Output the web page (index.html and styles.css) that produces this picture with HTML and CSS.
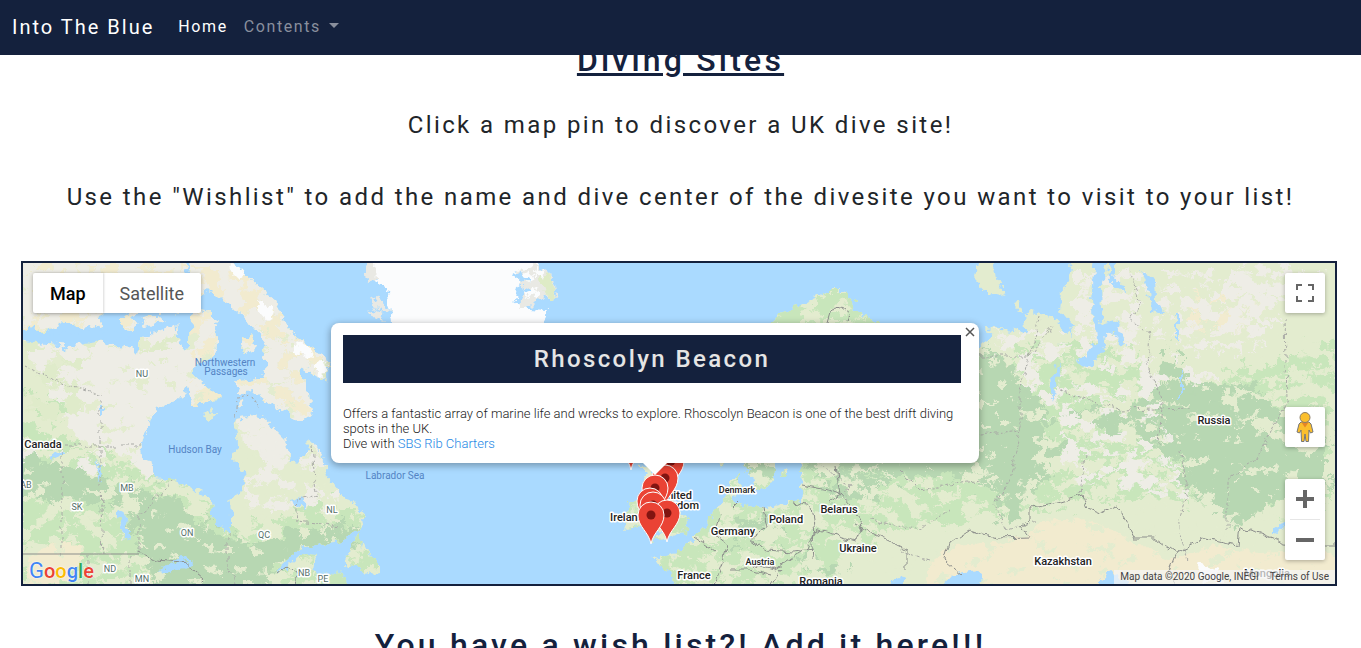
FILE: index.html
```html
<!DOCTYPE html>
<html lang="en">
<head>
<meta charset="utf-8">
<title>Into The Blue</title>
<link rel="stylesheet" href="styles.css">
</head>
<body>
<nav class="navbar">
  <a class="brand" href="#">Into The Blue</a>
  <a class="nav-link active" href="#">Home</a>
  <button class="nav-link dropdown" type="button">Contents<span class="caret"></span></button>
</nav>
<main class="page">
  <h2 class="title underlined">Diving Sites</h2>
  <p class="lead">Click a map pin to discover a UK dive site!</p>
  <p class="lead">Use the "Wishlist" to add the name and dive center of the divesite you want to visit to your list!</p>
  <section class="map" aria-label="Map of dive sites">
    <svg class="map-canvas" viewBox="23 263 1312 321" preserveAspectRatio="xMidYMid slice">
      <defs>
        <filter id="coast" x="0" y="0" width="1" height="1" color-interpolation-filters="sRGB">
          <feTurbulence type="fractalNoise" baseFrequency="0.13" numOctaves="3" seed="4" result="n"/>
          <feDisplacementMap in="SourceGraphic" in2="n" scale="12" xChannelSelector="R" yChannelSelector="G"/>
        </filter>
        <filter id="line" x="-0.1" y="-0.1" width="1.2" height="1.2" color-interpolation-filters="sRGB">
          <feTurbulence type="fractalNoise" baseFrequency="0.1" numOctaves="2" seed="9" result="n"/>
          <feDisplacementMap in="SourceGraphic" in2="n" scale="9" xChannelSelector="R" yChannelSelector="G"/>
        </filter>
        <filter id="patch" x="-0.1" y="-0.1" width="1.2" height="1.2" color-interpolation-filters="sRGB">
          <feTurbulence type="fractalNoise" baseFrequency="0.05 0.07" numOctaves="5" seed="7" result="n"/>
          <feColorMatrix in="n" values="0 0 0 0 0  0 0 0 0 0  0 0 0 0 0  24 0 0 0 -10.4" result="m"/>
          <feDisplacementMap in="SourceGraphic" in2="n" scale="46" xChannelSelector="G" yChannelSelector="B" result="d"/>
          <feComposite in="d" in2="m" operator="in"/>
        </filter>
        <filter id="sparse" x="-0.1" y="-0.1" width="1.2" height="1.2" color-interpolation-filters="sRGB">
          <feTurbulence type="fractalNoise" baseFrequency="0.05 0.07" numOctaves="4" seed="15" result="n"/>
          <feColorMatrix in="n" values="0 0 0 0 0  0 0 0 0 0  0 0 0 0 0  24 0 0 0 -12.6" result="m"/>
          <feComposite in="SourceGraphic" in2="m" operator="in"/>
        </filter>
        <filter id="fleck" x="0" y="0" width="1" height="1" color-interpolation-filters="sRGB">
          <feTurbulence type="fractalNoise" baseFrequency="0.06 0.09" numOctaves="4" seed="23" result="n"/>
          <feColorMatrix in="n" values="0 0 0 0 0  0 0 0 0 0  0 0 0 0 0  0 24 0 0 -15.4" result="m"/>
          <feComposite in="SourceGraphic" in2="m" operator="in"/>
        </filter>
        <clipPath id="land">
          <path d="M15 340L60 338 66 352 72 336 100 343 130 348 137 355 140 335 145 318 160 315 170 325 175 314 178 340 184 352 190 345 193 310 206 312 216 322 217 345 215 355 195 368 192 380 180 398 165 403 155 413 148 425 141 445 143 458 150 460 154 477 174 480 205 495 212 497 213 518 225 532 232 530 232 515 229 500 240 493 244 480 243 470 233 460 238 445 235 418 255 415 265 418 275 430 285 440 290 460 296 464 304 455 311 440 320 452 328 478 342 495 355 503 362 512 364 525 350 535 342 541 315 545 297 550 280 567 277 575 300 555 318 556 310 570 320 578 342 570 350 590 15 590Z"/>
          <path d="M360 531L352 545 343 565 355 563 365 575 378 572 378 562 370 553 362 548 360 540Z"/>
          <path d="M190 255H228L245 275 262 290 275 300 285 320 298 340 315 350 329 360 325 380 315 375 300 365 305 390 310 395 312 415 300 420 285 412 270 405 255 392 240 393 235 385 240 380 262 378 268 365 262 355 268 345 255 330 245 318 235 310 225 300 205 290 195 302 188 285Z"/>
          <path d="M15 255H188L182 284 192 302 185 312 150 308 130 316 118 306 95 318 85 329 62 322 45 332 15 326Z"/>
          <path d="M190 372L200 380 213 392 221 400 200 402 196 408 188 395ZM243 340l8 -4 4 8 -5 10 -9 -2ZM204 414l10 -4 2 5 -9 6ZM238 405l5 -3 2 3 -5 3ZM86 320l14 -4 2 9 -10 4ZM118 320l12 -6 9 10 -10 8Z"/>
          <path d="M763 330L780 313 798 307 812 299 827 291 845 291 855 303 850 310 868 316 890 330 800 340Z"/>
          <path d="M740 455H776L772 485 757 489 748 470ZM784 470l5 -3 -3 10 -4 0ZM715 455h15l-8 12Z"/>
          <path d="M628 505L640 500 646 512 643 524 633 529 623 530 627 520ZM640 461L651 470 660 482 672 498 676 510 688 519 687 530 670 537 652 542 661 530 655 524 661 510 655 498 646 480Z"/>
          <path d="M980 255H994L997 280 1007 299 990 295 974 278ZM1013 303l5 -1 6 9 -4 1Z"/>
          <path d="M800 455L980 345 992 336 985 328 1015 330 1027 335 1024 315 1030 312 1050 315 1062 328 1072 337 1070 322 1060 310 1062 290 1070 275 1073 255H1345V590H675L672 572 660 566 654 558 665 556 683 552 685 545 695 537 705 527 712 515 722 505 727 486 740 471 738 490 733 501 745 506 765 508 785 502 803 500Z"/>
        </clipPath>
      </defs>
      <rect x="23" y="263" width="1312" height="321" fill="#aadaff"/>
      <g filter="url(#coast)">
        <rect x="15" y="255" width="1328" height="337" fill="none"/>
        <g clip-path="url(#land)">
          <rect x="15" y="255" width="1330" height="337" fill="#e3eccf"/>
          <path fill="#eeede6" d="M22 250H330V470L310 440 280 470 240 440 225 350 150 480 125 455 80 440 60 410 23 345Z"/>
          <g fill="#c8e6bb" filter="url(#patch)">
            <path d="M15 410L70 440 130 460 200 500 240 535 330 500 380 510V590H15ZM640 455H960L1330 340V510L1100 500 900 530 790 590H640Z"/>
            <path d="M980 350L1100 340 1200 390 1340 340V450H980ZM770 290H900V330H770ZM620 490H700V545H620Z"/>
            <path d="M23 400H60L50 440 23 450Z"/>
          </g>
          <g fill="#dfebca" filter="url(#sparse)">
            <path d="M23 263H200V350H23ZM23 360h60v60H23ZM240 300h90v110h-90Z"/>
          </g>
          <g fill="#f2ebcf" filter="url(#sparse)">
            <path d="M23 263H200V330H23ZM190 265h130v150h-130Z"/>
          </g>
          <path fill="#f2ebcf" filter="url(#patch)" d="M1190 300L1225 296 1265 300 1255 335 1215 345 1190 330Z"/>
          <path fill="#f2ebcf" d="M932 560L955 545 1000 542 1030 535 1040 522 1090 520 1130 540 1170 560 1215 545 1260 553 1345 550V595H920ZM25 560L60 540 85 548 70 580 25 590Z"/>
          <g fill="#eeede6" filter="url(#patch)">
            <path d="M1075 270h18v60h-18ZM1230 270L1290 263 1320 280 1280 310 1250 360 1215 345Z"/>
          </g>
          <g fill="#eeede6" filter="url(#sparse)">
            <path d="M990 330h120v90H990ZM1080 270h140v180h-140ZM1060 400L1190 440 1190 500 1060 480ZM15 450h90v40H15ZM245 430h95v80h-95Z"/>
          </g>
          <g fill="#b7d7b2" filter="url(#patch)">
            <path d="M15 455L80 468 120 488 170 492 190 520 240 545 290 538 330 520 362 520 362 540 300 550 280 575 250 590H150L138 530 100 505 15 495Z"/>
            <path d="M960 345L1000 350 1040 400 1060 450 1050 480 1010 490 1005 525 985 490 930 465 860 470 800 465 830 440ZM1170 345L1200 380 1250 385 1290 420 1330 440 1330 480 1290 500 1240 520 1190 500 1180 460 1120 430 1060 415 1150 400ZM745 455h30v30h-30ZM800 465L900 475 880 500 830 495ZM735 520h60v20h-60ZM800 555L850 565 845 580 800 570Z"/>
          </g>
          <path fill="#b7d7b2" d="M140 500L175 500 205 530 245 543 290 540 350 530 330 544 295 550 262 575 235 588 160 588 145 555ZM20 462L80 470 110 488 100 500 60 498 20 490ZM975 355L1010 370 1035 410 1048 450 1030 482 1026 495 1012 525 1005 498 975 470 900 476 860 464ZM1172 360L1195 395 1240 415 1275 440 1320 455 1320 480 1265 500 1235 530 1215 500 1190 485 1180 450 1160 425Z" filter="url(#coast)"/>
          <rect x="15" y="330" width="1330" height="262" fill="#e3eccf" filter="url(#fleck)"/>
          <path fill="#fbfcfd" d="M232 262l15 12 -8 6 -10 -10ZM256 300l14 8 2 12 -14 -8ZM296 343l13 5 3 10 -15 -5ZM314 365l12 -6 2 12 -8 8ZM1195 562l25 8 4 12h-20Z"/>
        </g>
        <path fill="#fbfcfd" d="M368 255L376 280 388 292 393 330H537L547 311 530 310 515 300 518 285 540 270 535 255Z"/>
        <path fill="#e9e9e4" d="M364 263h11l2 16 -11 4ZM371 296l16 10 4 8 -14 -4ZM369 308l12 5 3 9 -10 -4ZM518 272l15 -8 18 10 6 26 -18 -2 -10 10 -12 0 8 -14Z"/>
        <path fill="#fbfcfd" d="M522 275l8 -4 4 8 -8 5ZM536 268l8 2 -2 6 -8 0ZM525 292l12 -6 2 6 -12 8Z"/>
        <path fill="#aadaff" d="M515 272l14 8 -1 3 -14 -6ZM520 291l12 -4 1 3 -13 5ZM535 296l20 4 -2 5 -18 0Z"/>
        <path fill="#deebc6" d="M540 276l10 -2 6 26 -9 -2Z"/>
        <g fill="#aadaff">
          <path d="M1095 255H1110L1102 285 1103 310 1099 325 1115 320 1122 335 1128 346 1120 345 1113 330 1104 333 1105 345 1095 362 1090 366 1075 361 1087 357 1096 337 1092 300ZM1109 255h7l-2 28 12 3 0 6 -16 -7ZM1134 255L1140 270 1155 280 1156 300 1167 314 1150 309 1148 290Z"/>
          <path d="M938 590L952 575 975 571 983 578 980 590ZM882 590l12 -10 12 -5v15ZM1098 580l14 -8 14 10v8h-28ZM1272 530l14 -9 0 6 -14 8Z"/>
          <path d="M116 512l8 -2 7 28 -5 4ZM96 471l3 -9 3 8 -3 11ZM50 454l14 -3 2 4 -12 5ZM160 570l20 -12 14 4 -8 6 -22 6ZM290 500l12 -3 4 12 -8 -4ZM100 405l5 0 0 10 -5 0ZM228 480l-3 9 3 0ZM1176 315h2v25h-2ZM1180 370l2 0 0 30 -2 0ZM1048 382l12 -20 -6 40Z"/>
          <path d="M23 336L90 330 130 332 180 316 182 322 140 338 100 340 70 346 23 342Z"/>
        </g>
      </g>
      <g class="region-lines" filter="url(#line)">
        <path d="M62 446v108M100 400v85l3 69M23 365l30 15 50 15M60 446h82M173 480l-34 38v35M228 532v40l10 14M88 555v29M130 555v29M235 418l2 -20 15 -2 8 12M312 445l4 50 -20 5 2 22 42 5"/>
        <path d="M1130 270l10 35 -10 15 20 12 -2 35 15 35 -5 40M980 356h50l22 -30M1040 315l-20 75v40M1020 430l-10 50 -15 25 12 25 30 -10M1060 390l60 20 70 -2M1285 320l2 80 -30 60 -30 20v50M1180 450l8 40 -10 30 10 40M820 465l30 20 -10 30M900 470l20 20 60 -10M870 520l50 10 30 -20M1085 455l-5 40M940 440l80 -10M930 560l-30 -10"/>
      </g>
      <g class="state-lines">
        <path d="M23 554h116"/>
        <g filter="url(#line)">
          <path d="M139 552l15 8 30 2 20 18M277 574l10 -8 8 6 4 14"/>
          <path d="M963 576L945 560 950 543 970 530 995 538 1030 537 1021 525 1030 520 1030 508 1050 505 1083 495 1088 508 1100 513 1117 505 1135 538 1155 538 1176 553 1205 538 1238 545 1240 527 1260 533 1285 543 1310 545 1335 545M1176 553l-8 20 10 14"/>
          <path d="M800 485l12 2 16 3 12 5 18 20 6 8 -8 18 -42 -12 -2 30M762 508l4 20 -16 10 16 12 28 2 20 -3M793 503l18 4 4 24 -8 20M720 515l-4 20 12 10 -6 20 -8 20M694 537l20 14M738 500l-6 6M856 525l30 15 20 10 0 20M745 562l30 8 30 -20M730 570h20l20 5M836 465l4 30 -10 5M827 323l3 -10 10 -6 9 7 -2 9M864 522l-5 10M770 584l10 -14"/>
        </g>
      </g>
      <g class="labels">
        <g class="state">
          <text x="142" y="377">NU</text><text x="26" y="488">AB</text><text x="77" y="510">SK</text><text x="127" y="491">MB</text><text x="187" y="536">ON</text><text x="264" y="538">QC</text><text x="332" y="513">NL</text><text x="110" y="572">ND</text><text x="142" y="582">MN</text><text x="304" y="576">NB</text><text x="323" y="582">PE</text>
        </g>
        <g class="sea">
          <text x="225" y="366">Northwestern</text><text x="226" y="375">Passages</text><text x="195" y="453">Hudson Bay</text><text x="395" y="479">Labrador Sea</text>
        </g>
        <g class="country">
          <text x="43" y="448">Canada</text><text x="627" y="521">Ireland</text><text x="676" y="499">United</text><text x="677" y="509">Kingdom</text><text x="733" y="535">Germany</text><text x="786" y="523">Poland</text><text x="839" y="513">Belarus</text><text x="858" y="552">Ukraine</text><text x="694" y="579">France</text><text x="821" y="585">Romania</text><text x="1063" y="565">Kazakhstan</text><text x="1214" y="424">Russia</text><text x="1267" y="577">Mongolia</text>
          <g class="minor"><text x="737" y="493">Denmark</text><text x="760" y="565">Austria</text></g>
        </g>
      </g>
      <g class="pins">
        <defs><g id="pin"><path d="M0 0C-2 -12 -13 -17 -13 -29A13 13 0 0 1 13 -29C13 -17 2 -12 0 0Z"/><circle cy="-29" r="4.500"/></g></defs>
        <use href="#pin" x="631" y="470"/><use href="#pin" x="671" y="490"/><use href="#pin" x="665" y="507"/><use href="#pin" x="655" y="517"/><use href="#pin" x="650" y="530"/><use href="#pin" x="653" y="534"/><use href="#pin" x="667" y="542"/><use href="#pin" x="651" y="544"/>
      </g>
    </svg>
    <div class="map-type">
      <button class="type-button selected" type="button">Map</button>
      <button class="type-button" type="button">Satellite</button>
    </div>
    <button class="control fullscreen" type="button" aria-label="Toggle fullscreen">
      <svg width="18" height="18" viewBox="0 0 18 18"><path d="M0 0h6v2H2v4H0ZM12 0h6v6h-2V2h-4ZM0 12h2v4h4v2H0ZM16 12h2v6h-6v-2h4Z" fill="#666"/></svg>
    </button>
    <button class="control pegman" type="button" aria-label="Street View">
      <svg width="18" height="32" viewBox="0 0 18 32"><path d="M5 11H13L15 13 17 21 14.500 22 13 19 12.500 30.500H10L9 23 8 30.500H5.500L5 19 3.500 22 1 21 3 13Z" fill="#fbbf2d" stroke="#777" stroke-width="1"/><path d="M5.500 11.500h7l-3.500 5Z" fill="#e58626"/><circle cx="9" cy="6.500" r="5" fill="#fbbf2d" stroke="#8c7c65" stroke-width="1"/></svg>
    </button>
    <div class="zoom">
      <button class="zoom-button" type="button" aria-label="Zoom in"><svg width="18" height="18" viewBox="0 0 18 18"><path d="M7 0h4v7h7v4h-7v7H7v-7H0V7h7Z" fill="#666"/></svg></button>
      <button class="zoom-button" type="button" aria-label="Zoom out"><svg width="18" height="18" viewBox="0 0 18 18"><path d="M0 7h18v4H0Z" fill="#666"/></svg></button>
    </div>
    <div class="google" aria-label="Google"><span class="b cap">G</span><span class="r">o</span><span class="y">o</span><span class="b">g</span><span class="g">l</span><span class="r">e</span></div>
    <div class="credits"><span>Map data ©2020 Google, INEGI</span><a href="#">Terms of Use</a></div>
    <article class="info">
      <button class="close" type="button" aria-label="Close"><svg width="10" height="10" viewBox="0 0 10 10"><path d="M1 1L9 9M9 1L1 9" stroke="#555" stroke-width="1.500"/></svg></button>
      <h3 class="info-title">Rhoscolyn Beacon</h3>
      <p class="info-text">Offers a fantastic array of marine life and wrecks to explore. Rhoscolyn Beacon is one of the best drift diving spots in the UK.<br>Dive with <a href="#">SBS Rib Charters</a></p>
    </article>
  </section>
  <h2 class="title">You have a wish list?! Add it here!!!</h2>
</main>
</body>
</html>
```
FILE: styles.css
```css
* { box-sizing: border-box; }
html { scrollbar-width: none; }
body { margin: 0; background: #fff; color: #212529; font-family: Roboto, sans-serif; }
button { font: inherit; border: 0; padding: 0; background: none; cursor: pointer; }
a { text-decoration: none; }

.navbar {
  position: fixed; top: 0; left: 0; right: 0; z-index: 5;
  display: flex; align-items: center;
  height: 55px; padding: 0 12px 2px;
  background: #14213d;
}
.brand { color: #fff; font-size: 20px; line-height: 30px; margin-right: 16px; letter-spacing: 0.1em; }
.nav-link { padding: 8px; color: #898f9d; font-size: 16px; line-height: 24px; letter-spacing: 0.1em; }
.nav-link.active { color: #fff; }
.dropdown { display: flex; align-items: center; gap: 8px; }
.caret { border: 5px solid transparent; border-top-color: #898f9d; border-bottom: 0; margin-bottom: 2px; }

.page { padding-top: 40px; text-align: center; }
.title { margin: 0; color: #14213d; font-size: 32px; line-height: 40px; font-weight: 500; letter-spacing: 0.1em; }
.underlined { text-decoration: underline; }
.lead { margin: 0; font-size: 24px; line-height: 36px; padding-top: 27px; letter-spacing: 0.1em; }
.lead + .lead { padding-top: 36px; }

.map {
  position: relative; overflow: hidden;
  height: 325px; margin: 46px 24px 39px 21px;
  border: 2px solid #14213d;
  text-align: left;
}
.map-canvas { display: block; width: 100%; height: 100%; }
.region-lines { fill: none; stroke: #a9aaa6; stroke-width: 1; stroke-dasharray: 3 2; }
.state-lines { fill: none; stroke: #8b8d8b; stroke-width: 1; }
.labels { text-anchor: middle; paint-order: stroke; stroke-linejoin: round; }
.state { font-size: 9px; fill: #55706a; stroke: #fff; stroke-width: 3px; }
.sea { font-size: 10px; fill: #5484c4; }
.country { font-size: 11px; font-weight: 500; fill: #222; stroke: #fff; stroke-width: 3px; }
.minor { font-size: 9px; }
.pins { fill: #ea4335; stroke: #fff; stroke-width: 1; }
.pins circle { fill: #811411; stroke: none; }

.map-type, .control, .zoom {
  position: absolute; background: #fff; border-radius: 2px;
  box-shadow: 0 1px 4px rgba(0, 0, 0, .3);
}
.map-type { display: flex; top: 10px; left: 10px; height: 40px; }
.type-button { padding: 0 17px; font-size: 18px; color: #565656; }
.type-button.selected { color: #000; font-weight: 500; box-shadow: 1px 0 2px rgba(0, 0, 0, .15); }
.control { right: 10px; width: 40px; height: 40px; display: grid; place-items: center; }
.fullscreen { top: 10px; }
.pegman { bottom: 137px; }
.zoom { right: 10px; bottom: 24px; width: 40px; padding: 0 5px; }
.zoom-button { display: grid; place-items: center; width: 100%; height: 40px; }
.zoom-button + .zoom-button { border-top: 1px solid #e6e6e6; height: 41px; }

.google {
  position: absolute; left: 6px; bottom: 1px;
  font-size: 20px; line-height: 24px; font-weight: 500;
  text-shadow: 0 0 1px #fff, 0 0 2px #fff;
}
.cap { font-size: 22px; font-weight: 400; }
.b { color: #4285f4; } .r { color: #ea4335; } .y { color: #fbbc05; } .g { color: #34a853; }
.credits {
  position: absolute; right: 0; bottom: 0; display: flex; gap: 11px;
  padding: 0 6px; background: rgba(245, 245, 245, .7);
  font-size: 10px; line-height: 14px; color: #444;
}
.credits a { color: #444; }

.info {
  position: absolute; top: 60px; left: calc(50% - 348px); width: 648px;
  padding: 12px 18px 12px 12px;
  background: #fff; border-radius: 8px; box-shadow: 0 2px 7px 1px rgba(0, 0, 0, .3);
}
.info::after {
  content: ""; position: absolute; left: 312px; top: 100%;
  border: 12px solid transparent; border-top-color: #fff; border-bottom: 0;
}
.close { position: absolute; top: 4px; right: 4px; width: 10px; height: 10px; display: grid; }
.info-title {
  margin: 0 0 23px; background: #14213d; color: #e5e5e5; text-align: center;
  font-size: 24px; line-height: 48px; font-weight: 500; letter-spacing: 0.1em;
}
.info-text { margin: 0; font-size: 13px; line-height: 15px; font-weight: 300; color: #222; }
.info-text a { color: #1e88e5; }
```
